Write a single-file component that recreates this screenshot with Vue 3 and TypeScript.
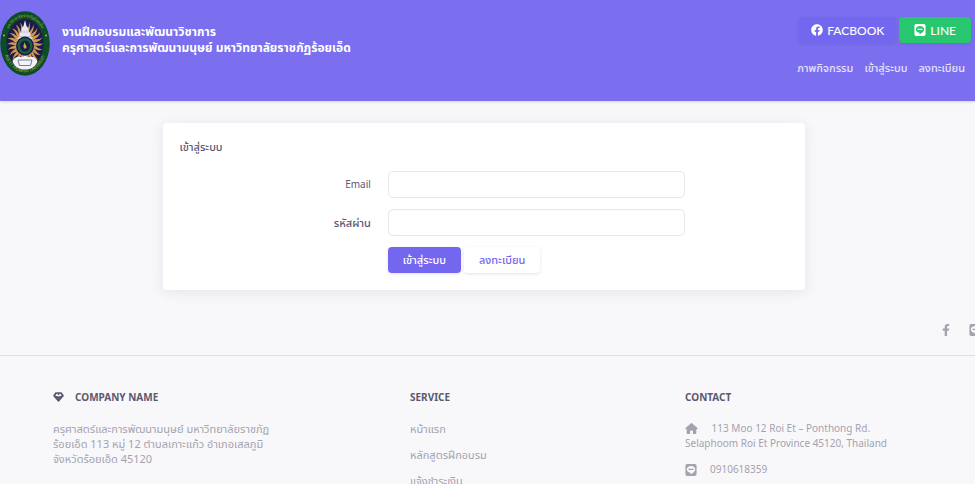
<script setup lang="ts">
import { ref } from 'vue'

interface NavLink {
  label: string
  href: string
}

const email = ref('')
const password = ref('')

const navLinks: NavLink[] = [
  { label: 'ภาพกิจกรรม', href: '#gallery' },
  { label: 'เข้าสู่ระบบ', href: '#login' },
  { label: 'ลงทะเบียน', href: '#register' },
]

const services: NavLink[] = [
  { label: 'หน้าแรก', href: '#home' },
  { label: 'หลักสูตรฝึกอบรม', href: '#courses' },
  { label: 'แจ้งชำระเงิน', href: '#payment' },
]

const rays = Array.from({ length: 24 }, (_, i) => (i * 360) / 24)

const linePath =
  'M80 32h288a64 64 0 0 1 64 64v320a64 64 0 0 1-64 64H80a64 64 0 0 1-64-64V96a64 64 0 0 1 64-64zM224 104c-88 0-158 56-158 128 0 64 56 114 130 126 18 3 14 10 10 46-1 8 5 12 14 8 66-32 162-96 162-180 0-72-70-128-158-128zM130 212h188v44H130z'
</script>

<template>
  <div class="page">
    <header class="header">
      <div class="brand">
        <svg class="logo" viewBox="0 0 100 130" role="img" aria-label="Roi Et Rajabhat University">
          <defs>
            <path id="arcTop" d="M10 65a40 53 0 0 1 80 0" />
            <path id="arcBottom" d="M6 65a44 58 0 0 0 88 0" />
          </defs>
          <ellipse cx="50" cy="65" rx="49.500" ry="64.500" fill="#0b4d24" />
          <ellipse cx="50" cy="65" rx="37" ry="49" fill="#1d1b4b" />
          <g fill="#d09a50" transform="translate(50 66) scale(1 1.250)">
            <path v-for="angle in rays" :key="angle" d="M-2-14C-5-21 2-26-1-36 6-27 1-21 3-14z" :transform="`rotate(${angle})`" />
          </g>
          <text class="seal-text"><textPath href="#arcTop" startOffset="50%">มหาวิทยาลัยราชภัฏร้อยเอ็ด</textPath></text>
          <text class="seal-text"><textPath href="#arcBottom" startOffset="50%">ROI ET RAJABHAT UNIVERSITY</textPath></text>
          <circle cx="8" cy="49" r="2" fill="#d8a04c" />
          <circle cx="92" cy="49" r="2" fill="#d8a04c" />
          <path d="M50 18l3 12 4 5v6l4 4v6l4 4v6H35v-6l4-4v-6l4-4v-6l4-5z" fill="#e6e6f0" />
          <path d="M43 42h14M39 51h22" stroke="#9a9bb5" stroke-width="1" />
          <ellipse cx="50" cy="70" rx="18" ry="19" fill="#1d1b4b" />
          <ellipse cx="50" cy="70" rx="15" ry="16" fill="#17603a" />
          <ellipse cx="50" cy="70" rx="10" ry="11" fill="#1d1b4b" />
          <path d="M50 61c-1 5-4 6-3 11s7 4 6-1c-1-4-4-4-3-10z" fill="#b5b83c" />
          <path d="M25 100c4-9 14-10 18-7 4-4 10-4 14 0 4-3 14-2 18 7-3 12-14 17-25 17s-22-5-25-17z" fill="#f2f2f8" />
          <path d="M36 98h28l-3 11H39z" fill="#f2f2f8" stroke="#777aa3" stroke-width="2" />
        </svg>
        <h1 class="title">งานฝึกอบรมและพัฒนาวิชาการ<br />ครุศาสตร์และการพัฒนามนุษย์ มหาวิทยาลัยราชภัฏร้อยเอ็ด</h1>
      </div>
      <div class="header-side">
        <div class="socials">
          <a class="btn social facebook" href="#facebook">
            <svg class="icon" viewBox="0 0 512 512" aria-hidden="true"><path d="M504 256C504 119 393 8 256 8S8 119 8 256c0 123.780 90.690 226.380 209.250 245V327.690h-63V256h63v-54.640c0-62.150 37-96.480 93.670-96.480 27.140 0 55.520 4.840 55.520 4.840v61h-31.280c-30.800 0-40.410 19.120-40.410 38.730V256h68.780l-11 71.690h-57.780V501C413.310 482.380 504 379.780 504 256z" /></svg>
            FACBOOK
          </a>
          <a class="btn social line" href="#line">
            <svg class="icon" viewBox="16 32 416 448" aria-hidden="true"><path fill-rule="evenodd" :d="linePath" /></svg>
            LINE
          </a>
        </div>
        <nav class="nav">
          <a v-for="link in navLinks" :key="link.href" :href="link.href">{{ link.label }}</a>
        </nav>
      </div>
    </header>

    <main class="main">
      <form class="card" @submit.prevent>
        <h2 class="card-title">เข้าสู่ระบบ</h2>
        <div class="field">
          <label for="email">Email</label>
          <input id="email" v-model="email" type="email" autocomplete="email" />
        </div>
        <div class="field">
          <label for="password" class="thai">รหัสผ่าน</label>
          <input id="password" v-model="password" type="password" autocomplete="current-password" />
        </div>
        <div class="field">
          <div class="actions">
            <button class="btn primary" type="submit">เข้าสู่ระบบ</button>
            <button class="btn plain" type="button">ลงทะเบียน</button>
          </div>
        </div>
      </form>
    </main>

    <footer class="footer">
      <div class="footer-social">
        <a href="#facebook" aria-label="Facebook"><svg class="icon" viewBox="0 0 320 512" aria-hidden="true"><path d="M279.140 288l14.220-92.660h-88.910v-60.130c0-25.350 12.420-50.060 52.240-50.060h40.420V6.260S260.430 0 225.360 0c-73.220 0-121.080 44.380-121.080 124.720v70.620H22.890V288h81.390v224h100.170V288z" /></svg></a>
        <a href="#line" aria-label="LINE"><svg class="icon" viewBox="16 32 416 448" aria-hidden="true"><path fill-rule="evenodd" :d="linePath" /></svg></a>
      </div>
      <div class="columns">
        <section>
          <h3 class="with-icon">
            <svg class="gem" viewBox="0 0 576 512" aria-hidden="true"><path fill-rule="evenodd" d="M144 12h288q16 0 26 13l110 148q14 18-2 36L306 500q-18 18-36 0L10 209q-16-18-2-36L118 25q10-13 26-13zM190 84l-56 82q-6 14 10 20l144 38 144-38q16-6 10-20l-56-82q-10-10-22 2l-76 76-76-76q-12-12-22-2z" /></svg>
            COMPANY NAME
          </h3>
          <p class="about">ครุศาสตร์และการพัฒนามนุษย์ มหาวิทยาลัยราชภัฏร้อยเอ็ด 113 หมู่ 12 ตำบลเกาะแก้ว อำเภอเสลภูมิ จังหวัดร้อยเอ็ด 45120</p>
        </section>
        <section>
          <h3>SERVICE</h3>
          <p v-for="item in services" :key="item.href" class="thai"><a :href="item.href">{{ item.label }}</a></p>
        </section>
        <section>
          <h3>CONTACT</h3>
          <p class="address">
            <svg class="home" viewBox="0 0 576 512" aria-hidden="true"><path d="M576 256c0 18-15 32-32 32h-32l1 176c0 26-20 48-48 48h-81c-18 0-32-14-32-32v-96c0-18-14-32-32-32h-64c-18 0-32 14-32 32v96c0 18-14 32-32 32h-80c-28 0-48-22-48-48V288H32c-18 0-32-14-32-32 0-9 3-17 10-24L266 8c7-7 15-8 22-8s15 2 21 7l256 225c8 7 12 15 11 24z" /></svg>
            113 Moo 12 Roi Et – Ponthong Rd. Selaphoom Roi Et Province 45120, Thailand
          </p>
          <p class="phone">
            <svg class="icon" viewBox="16 32 416 448" aria-hidden="true"><path fill-rule="evenodd" :d="linePath" /></svg>
            0910618359
          </p>
        </section>
      </div>
    </footer>
  </div>
</template>

<style>
body {
  background: #f8f8fb;
  overflow: hidden;
}
</style>

<style scoped>
.page {
  font-family: 'Noto Sans', 'Noto Sans Thai', sans-serif;
  font-size: 10px;
  line-height: 15px;
  color: #5c5870;
}
a {
  color: inherit;
  text-decoration: none;
}
svg {
  fill: currentColor;
}
h1, h2, h3, p {
  margin: 0;
}
.thai {
  font-size: 11px;
}
.header {
  display: flex;
  justify-content: space-between;
  align-items: flex-start;
  box-sizing: border-box;
  min-height: 101px;
  padding: 11px 4px 0 0;
  background: #7b6ff0;
  color: #fff;
  box-shadow: 0 1px 3px rgba(60, 50, 90, 0.2);
}
.brand {
  display: flex;
  gap: 12px;
}
.logo {
  width: 50px;
  height: 65px;
}
.seal-text {
  fill: #b5a84e;
  font-size: 8px;
  text-anchor: middle;
}
.title {
  padding-top: 13px;
  font-size: 12px;
  font-weight: 700;
  line-height: 16px;
}
.header-side {
  display: flex;
  flex-direction: column;
  align-items: flex-end;
  gap: 17px;
  padding-top: 6px;
}
.socials {
  display: flex;
  gap: 3px;
}
.btn {
  display: inline-flex;
  align-items: center;
  justify-content: center;
  box-sizing: border-box;
  height: 26px;
  padding: 0 15px;
  border: 0;
  border-radius: 4px;
  font-family: inherit;
  font-size: 11px;
  font-weight: 500;
  box-shadow: 0 1px 3px rgba(60, 50, 90, 0.15);
}
.social {
  gap: 4px;
  padding: 0 14px;
  font-family: Lato, sans-serif;
  font-size: 12px;
  font-weight: 500;
}
.facebook {
  padding: 0 12px;
}
.line {
  padding: 0 15px;
  background: #28c76f;
}
.facebook,
.primary {
  background: #7367f0;
  color: #fff;
}
.plain {
  background: #fff;
  color: #7367f0;
}
.icon {
  width: 12px;
  height: 12px;
}
.nav {
  display: flex;
  gap: 11px;
  padding-right: 6px;
  color: #e6e2fc;
  font-size: 11px;
  font-weight: 500;
}
.main {
  display: flex;
  justify-content: center;
  padding: 22px 7px 34px 0;
}
.card {
  display: grid;
  gap: 11px;
  box-sizing: border-box;
  width: calc(66% + 4px);
  padding: 16px 17px 17px;
  border-radius: 4px;
  background: #fff;
  box-shadow: 0 2px 14px rgba(60, 50, 90, 0.1);
}
.card-title {
  padding-bottom: 6px;
  font-size: 11px;
  font-weight: 500;
}
.field {
  display: grid;
  grid-template-columns: 191fr 297fr 86fr;
  gap: 17px;
  align-items: center;
}
.field label {
  text-align: right;
}
.field .thai {
  font-weight: 500;
}
.field input {
  box-sizing: border-box;
  width: 100%;
  height: 27px;
  padding: 0 10px;
  border: 1px solid #e6e5e9;
  border-radius: 5px;
  font: inherit;
  color: inherit;
}
.actions {
  grid-column: 2;
  display: flex;
  gap: 3px;
}
.footer {
  color: #a5a2ad;
}
.footer-social {
  display: flex;
  justify-content: flex-end;
  gap: 17px;
  height: 31px;
  margin-right: -6px;
  border-bottom: 1px solid #dfdee3;
}
.columns {
  display: grid;
  grid-template-columns: 357fr 275fr 290fr;
  padding: 33px 0 0 53px;
}
h3 {
  margin-bottom: 16px;
  color: #5c5870;
  font-size: 10px;
  font-weight: 700;
  line-height: 16px;
}
.columns p {
  margin-bottom: 11px;
}
.with-icon {
  display: flex;
  align-items: center;
  gap: 11px;
}
.gem {
  width: 11px;
  height: 10px;
}
.about {
  max-width: 220px;
  font-size: 11px;
}
.address {
  max-width: 215px;
}
.home {
  width: 13px;
  height: 11px;
  margin-right: 11px;
  vertical-align: -2px;
}
.phone {
  display: flex;
  align-items: center;
  gap: 13px;
}
</style>
